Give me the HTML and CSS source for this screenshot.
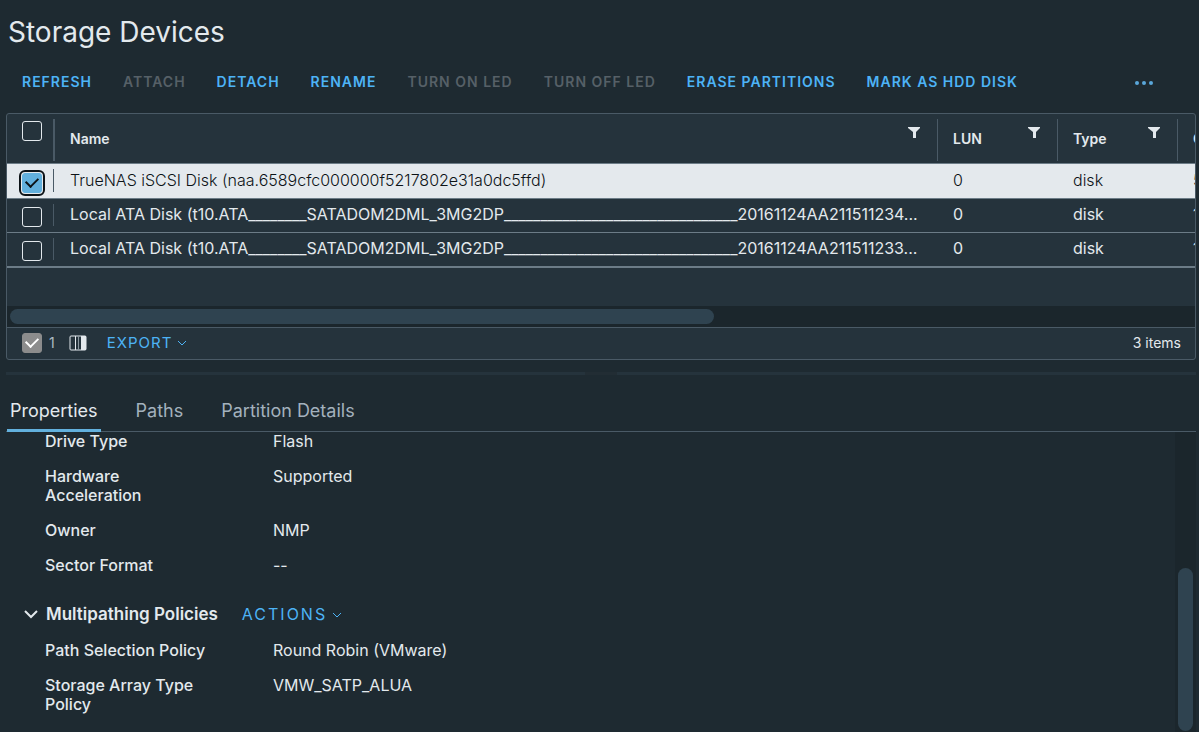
FILE: index.html
```html
<!DOCTYPE html>
<html lang="en">
<head>
  <meta charset="UTF-8">
  <meta name="viewport" content="width=device-width, initial-scale=1.0">
  <title>Storage Devices</title>
  <link rel="stylesheet" href="styles.css">
</head>
<body>
  <main class="view">
    <h1 class="view-title">Storage Devices</h1>

    <div class="toolbar">
      <button type="button" class="btn">Refresh</button>
      <button type="button" class="btn" disabled>Attach</button>
      <button type="button" class="btn">Detach</button>
      <button type="button" class="btn">Rename</button>
      <button type="button" class="btn" disabled>Turn on LED</button>
      <button type="button" class="btn" disabled>Turn off LED</button>
      <button type="button" class="btn">Erase partitions</button>
      <button type="button" class="btn">Mark as HDD disk</button>
      <button type="button" class="btn btn-more" aria-label="More actions">
        <svg width="20" height="6" viewBox="0 0 20 6"><circle cx="3" cy="4" r="2"/><circle cx="10" cy="4" r="2"/><circle cx="17" cy="4" r="2"/></svg>
      </button>
    </div>

    <!-- Device grid -->
    <section class="datagrid">
      <div class="datagrid-scroll">
        <table class="grid">
          <colgroup>
            <col class="col-select"><col class="col-name"><col class="col-small"><col class="col-small"><col class="col-rest">
          </colgroup>
          <thead>
            <tr>
              <th class="cell-select"><input type="checkbox" class="check" aria-label="Select all"></th>
              <th><div class="head"><span>Name</span><button type="button" class="filter" aria-label="Filter name"><svg width="12" height="11" viewBox="0 0 12 11"><path d="M0 0h12v1L8 5v6H5V5L0 1z"/></svg></button></div></th>
              <th><div class="head"><span>LUN</span><button type="button" class="filter" aria-label="Filter LUN"><svg width="12" height="11" viewBox="0 0 12 11"><path d="M0 0h12v1L8 5v6H5V5L0 1z"/></svg></button></div></th>
              <th><div class="head"><span>Type</span><button type="button" class="filter" aria-label="Filter type"><svg width="12" height="11" viewBox="0 0 12 11"><path d="M0 0h12v1L8 5v6H5V5L0 1z"/></svg></button></div></th>
              <th><div class="head"><span>Capacity</span></div></th>
            </tr>
          </thead>
          <tbody>
            <tr class="selected">
              <td class="cell-select"><input type="checkbox" class="check" aria-label="Select TrueNAS iSCSI Disk" checked></td>
              <td>TrueNAS iSCSI Disk (naa.6589cfc000000f5217802e31a0dc5ffd)</td>
              <td>0</td>
              <td>disk</td>
              <td>500.00 GB</td>
            </tr>
            <tr>
              <td class="cell-select"><input type="checkbox" class="check" aria-label="Select first local disk"></td>
              <td>Local ATA Disk (t10.ATA________SATADOM2DML_3MG2DP________________________________20161124AA211511234...</td>
              <td>0</td>
              <td>disk</td>
              <td>119.24 GB</td>
            </tr>
            <tr>
              <td class="cell-select"><input type="checkbox" class="check" aria-label="Select second local disk"></td>
              <td>Local ATA Disk (t10.ATA________SATADOM2DML_3MG2DP________________________________20161124AA211511233...</td>
              <td>0</td>
              <td>disk</td>
              <td>119.24 GB</td>
            </tr>
          </tbody>
        </table>
      </div>
      <div class="scroll-x"><div class="thumb-x"></div></div>
      <footer class="grid-footer">
        <input type="checkbox" class="check check-count" aria-label="Selected items" checked disabled>
        <span class="count">1</span>
        <button type="button" class="columns" aria-label="Manage columns">
          <svg width="18" height="16" viewBox="0 0 18 16"><rect x="1" y="1" width="16" height="14" rx="1" fill="none" stroke="currentColor"/><path d="M6.500 1v14" stroke="currentColor"/><path d="M9.500 1v14" stroke="#8a979f"/><path d="M12 1h5v14h-5z" fill="currentColor"/></svg>
        </button>
        <button type="button" class="export">Export <svg width="10" height="6" viewBox="0 0 10 6"><path d="M1 1l4 4 4-4"/></svg></button>
        <span class="total">3 items</span>
      </footer>
    </section>

    <div class="splitter"><span class="splitter-handle"></span></div>

    <!-- Details of the selected device -->
    <section class="details">
      <div class="tabs" role="tablist">
        <button type="button" role="tab" class="tab active" aria-selected="true">Properties</button>
        <button type="button" role="tab" class="tab" aria-selected="false">Paths</button>
        <button type="button" role="tab" class="tab" aria-selected="false">Partition Details</button>
      </div>
      <div class="panel">
        <div class="panel-body">
          <dl class="props">
            <dt>Drive Type</dt><dd>Flash</dd>
            <dt>Hardware Acceleration</dt><dd>Supported</dd>
            <dt>Owner</dt><dd>NMP</dd>
            <dt>Sector Format</dt><dd>--</dd>
          </dl>
          <div class="group">
            <button type="button" class="group-title"><svg width="14" height="9" viewBox="0 0 14 9"><path d="M1 1l6 6 6-6"/></svg>Multipathing Policies</button>
            <button type="button" class="actions">Actions <svg width="10" height="6" viewBox="0 0 10 6"><path d="M1 1l4 4 4-4"/></svg></button>
          </div>
          <dl class="props">
            <dt>Path Selection Policy</dt><dd>Round Robin (VMware)</dd>
            <dt>Storage Array Type Policy</dt><dd>VMW_SATP_ALUA</dd>
          </dl>
        </div>
        <div class="scroll-y"><div class="thumb-y"></div></div>
      </div>
    </section>
  </main>
</body>
</html>
```

FILE: styles.css
```css
* {
  box-sizing: border-box;
}

body {
  margin: 0;
  background: #1e2a31;
  color: #e3e9ed;
  font-family: Inter, "Open Sans", sans-serif;
  font-size: 16px;
  line-height: 19px;
}

button {
  padding: 0;
  border: 0;
  background: none;
  color: inherit;
  font: inherit;
  cursor: pointer;
}

svg {
  display: block;
}

.view {
  display: flex;
  flex-direction: column;
  height: 100vh;
  padding: 14px 3px 0 6px;
  overflow: hidden;
}

.view-title {
  margin: 0 2px;
  font-size: 28px;
  font-weight: 400;
  line-height: 36px;
}

/* Toolbar */
.toolbar {
  display: flex;
  align-items: center;
  gap: 31px;
  height: 63px;
  padding: 0 42px 0 16px;
}

.btn {
  color: #4db3f6;
  font-size: 14px;
  font-weight: 600;
  letter-spacing: 1px;
  text-transform: uppercase;
  white-space: nowrap;
}

.btn:disabled {
  color: #566067;
  cursor: default;
}

.btn-more {
  margin-left: auto;
  fill: #5aa7da;
}

/* Datagrid */
.datagrid {
  border: 1px solid #4a5a66;
  border-radius: 3px;
  background: #25333c;
}

.datagrid-scroll {
  height: 192px;
  overflow: hidden;
}

.grid {
  width: 1980px;
  border-collapse: separate;
  border-spacing: 0;
  table-layout: fixed;
}

.col-select {
  width: 48px;
}

.col-name {
  width: 883px;
}

.col-small {
  width: 120px;
}

.grid th,
.grid td {
  padding: 0 18px 0 15px;
  border-bottom: 1px solid #6c7c87;
  font-weight: 400;
  text-align: left;
  white-space: nowrap;
}

.grid th {
  position: relative;
  height: 50px;
  font-size: 14px;
  font-weight: 600;
}

.grid td {
  height: 34px;
  padding-bottom: 2px;
}

.grid .selected td {
  height: 35px;
  font-weight: 300;
}

.grid tbody tr:last-child td {
  height: 35px;
  border-bottom-width: 2px;
}

.grid .cell-select {
  position: relative;
  padding: 3px 13px 0 15px;
}

.grid th.cell-select {
  padding-top: 7px;
  vertical-align: top;
}

/* Column separators */
.grid th:not(:last-child)::after,
.grid .cell-select::after {
  content: "";
  position: absolute;
  top: 5px;
  right: 0;
  bottom: 2px;
  width: 1px;
  background: #4a5a66;
}

.grid th.cell-select::after {
  width: 2px;
}

.grid td.cell-select::after {
  right: 1px;
  bottom: 6px;
}

.head {
  display: flex;
  align-items: center;
  justify-content: space-between;
}

.filter {
  padding-bottom: 12px;
  fill: #e3e9ed;
}

.selected {
  background: #e4e9ed;
  color: #0d1317;
}

/* Checkboxes */
.check {
  display: block;
  appearance: none;
  width: 20px;
  height: 20px;
  margin: 0;
  border: 1px solid #e3e9ed;
  border-radius: 3px;
}

.check:checked {
  display: grid;
  place-items: center;
  border-color: #62b0dd;
  background: #62b0dd;
  color: #0d1317;
}

.check:checked::before {
  content: "";
  width: 10px;
  height: 6px;
  margin-top: -3px;
  border: solid currentColor;
  border-width: 0 0 2px 2px;
  transform: rotate(-45deg);
}

.selected .check {
  outline: 2px solid #0d1317;
  outline-offset: 1px;
}

.check-count:checked {
  border-color: #8c8c8c;
  background: #8c8c8c;
  color: #ffffff;
}

.scroll-x {
  padding: 3px;
  background: #1b262c;
}

.thumb-x {
  width: 59.6%;
  height: 15px;
  border-radius: 8px;
  background: #2f4350;
}

.grid-footer {
  display: flex;
  align-items: center;
  height: 32px;
  padding: 0 14px 2px 15px;
  border-top: 1px solid #4a5a66;
  font-size: 14px;
}

.count {
  margin: 0 14px 0 7px;
  color: #adbbc4;
}

.columns {
  margin-right: 20px;
}

.export,
.actions {
  display: flex;
  align-items: center;
  gap: 5px;
  color: #4db3f6;
  font-size: 15px;
  letter-spacing: 1px;
  text-transform: uppercase;
}

.export svg,
.actions svg,
.group-title svg {
  fill: none;
  stroke: currentColor;
}

.total {
  margin-left: auto;
}

.splitter {
  flex: none;
  height: 3px;
  margin: 12px 0 16px;
  background: #25333c;
}

.splitter-handle {
  display: block;
  width: 32px;
  height: 3px;
  margin: 0 auto;
  background: #222d34;
}

/* Tabs */
.details {
  display: flex;
  flex: 1;
  flex-direction: column;
  min-height: 0;
}

.tabs {
  display: flex;
  flex: none;
  gap: 32px;
  height: 41px;
  padding-left: 1px;
  border-bottom: 1px solid #4a5a66;
}

.tab {
  height: 41px;
  padding: 0 3px 2px;
  color: #a3b1bd;
  font-size: 18px;
}

.tab.active {
  border-bottom: 3px solid #62b0dd;
  padding-top: 1px;
  padding-bottom: 0;
  color: #e3e9ed;
}

.panel {
  display: flex;
  flex: 1;
  min-height: 0;
}

.panel-body {
  flex: 1;
  overflow: hidden;
}

.props {
  display: grid;
  grid-template-columns: 164px 1fr;
  gap: 16px 64px;
  margin: 0;
  padding-left: 39px;
}

.props dt {
  font-weight: 500;
}

.props dd {
  margin: 0;
}

.group {
  display: flex;
  align-items: center;
  gap: 24px;
  margin: 30px 0 17px;
  padding-left: 18px;
}

.group-title {
  display: flex;
  align-items: center;
  gap: 8px;
  font-size: 17px;
  font-weight: 600;
}

.group-title svg {
  stroke-width: 2px;
}

.actions {
  font-size: 16px;
  letter-spacing: 2px;
}

.scroll-y {
  display: flex;
  flex-direction: column;
  justify-content: flex-end;
  width: 21px;
  padding: 3px 3px 1px;
  background: #1b262c;
}

.thumb-y {
  height: 55%;
  border-radius: 8px;
  background: #2f4350;
}
```
